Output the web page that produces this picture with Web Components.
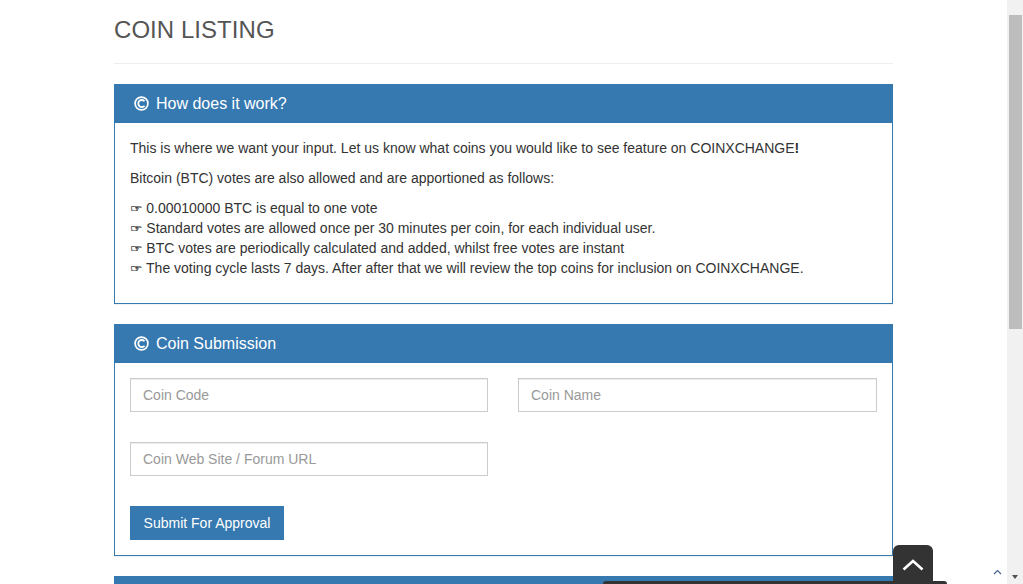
<!DOCTYPE html>
<html><head><meta charset="utf-8"><style>
html,body{margin:0;height:584px;overflow:hidden;background:#fff;font-family:"Liberation Sans",Arial,sans-serif;font-size:14px;line-height:20px;color:#333}
hand-mark{margin-right:-.6px}
</style></head><body>
<coin-page>
<page-title>COIN LISTING</page-title>
<info-panel heading="How does it work?">
<p>This is where we want your input. Let us know what coins you would like to see feature on COINXCHANGE<b>!</b></p>
<p>Bitcoin (BTC) votes are also allowed and are apportioned as follows:</p>
<p class="last"><hand-mark>☞</hand-mark> 0.00010000 BTC is equal to one vote<br><hand-mark>☞</hand-mark> Standard votes are allowed once per 30 minutes per coin, for each individual user.<br><hand-mark>☞</hand-mark> BTC votes are periodically calculated and added, whilst free votes are instant<br><hand-mark>☞</hand-mark> The voting cycle lasts 7 days. After after that we will review the top coins for inclusion on COINXCHANGE.</p>
</info-panel>
<info-panel heading="Coin Submission"><coin-form></coin-form></info-panel>
<info-panel heading=""></info-panel>
</coin-page>
<page-overlays></page-overlays>
<script>
function def(name,html,init){customElements.define(name,class extends HTMLElement{constructor(){super();this.attachShadow({mode:'open'}).innerHTML=html;}connectedCallback(){if(init)init(this);}});}
def('coin-page',`<style>:host{display:block;width:779px;margin-left:114px;height:584px;overflow:hidden}</style><slot></slot>`);
def('hand-mark',`<style>:host{display:inline-block;transform:scaleY(.72);transform-origin:50% 62%;color:#111;-webkit-text-stroke:.25px #111}</style><slot></slot>`);
def('page-title',`<style>:host{display:block;height:63px;border-bottom:1px solid #eee;margin-bottom:20px}
h1{margin:0;padding-top:17px;font:24px/26px "Liberation Sans",Arial,sans-serif;color:#555;letter-spacing:.05px}</style><h1><slot></slot></h1>`);
def('info-panel',`<style>:host{display:block;margin-bottom:20px;box-shadow:0 1px 1px rgba(0,0,0,.05)}
header{background:#3579b0;color:#fff;height:39px;display:flex;align-items:center;padding-left:20px;gap:7px;font-size:16px}
svg{display:block}
.b{border:1px solid #3579b0;border-top:0;padding:15px}
::slotted(p){margin:0 0 10px}
</style><header><svg width="15" height="15" viewBox="0 0 15 15" fill="none" stroke="#fff"><circle cx="7.5" cy="7.5" r="6.4" stroke-width="1.7"/><path d="M10.5 5.3A3.5 3.5 0 1 0 10.5 9.7" stroke-width="1.8"/></svg><span id="t"></span></header><div class="b"><slot></slot></div>`,
el=>{el.shadowRoot.getElementById('t').textContent=el.getAttribute('heading');});
def('coin-form',`<style>:host{display:block}
.row{display:grid;grid-template-columns:358px 359px;column-gap:30px;margin-bottom:30px}
input{box-sizing:border-box;width:100%;height:34px;border:1px solid #ccc;padding:6px 12px;font:14px/20px "Liberation Sans",Arial,sans-serif;color:#555;background:#fff;border-radius:0;outline:0;display:block;box-shadow:inset 0 1px 1px rgba(0,0,0,.075)}
input::placeholder{color:#999;opacity:1}
button{display:block;height:34px;width:154px;background:#3579b0;color:#fff;border:0;padding:0;font:14px/20px "Liberation Sans",Arial,sans-serif}
</style><div class="row"><input placeholder="Coin Code"><input placeholder="Coin Name"></div><div class="row"><input placeholder="Coin Web Site / Forum URL"></div><button>Submit For Approval</button>`);
def('page-overlays',`<style>:host{display:block}
.sb{position:fixed;left:1007px;top:0;width:16px;height:584px;background:#f1f1f1}
.th{position:absolute;left:2px;top:15px;width:13px;height:314px;background:#bdbdbd}
.dn{position:absolute;left:5px;top:575px;width:0;height:0;border-left:3.5px solid transparent;border-right:3.5px solid transparent;border-top:4.5px solid #505050}
.top{position:fixed;left:893px;top:545px;width:40px;height:39px;background:#333;border-radius:6px 6px 0 0}
.top svg,.m svg{position:absolute;display:block}
.chat{position:fixed;left:603px;top:581px;width:344px;height:3px;background:#333;border-radius:6px 6px 0 0}
.m{position:fixed;left:992px;top:568px;width:11px;height:8px}
</style><div class="chat"></div><div class="top"><svg style="left:9px;top:13px" width="22" height="13" viewBox="0 0 22 13" fill="none" stroke="#fff" stroke-width="2.6"><path d="M1.5 11.5 11 3l9.5 8.5"/></svg></div><div class="m"><svg style="left:1px;top:1px" width="9" height="6" viewBox="0 0 9 6" fill="none" stroke="#44658a" stroke-width="1.2"><path d="M1 5 4.5 1.5 8 5"/></svg></div><div class="sb"><div class="th"></div><div class="dn"></div></div>`);
</script>
</body></html>
